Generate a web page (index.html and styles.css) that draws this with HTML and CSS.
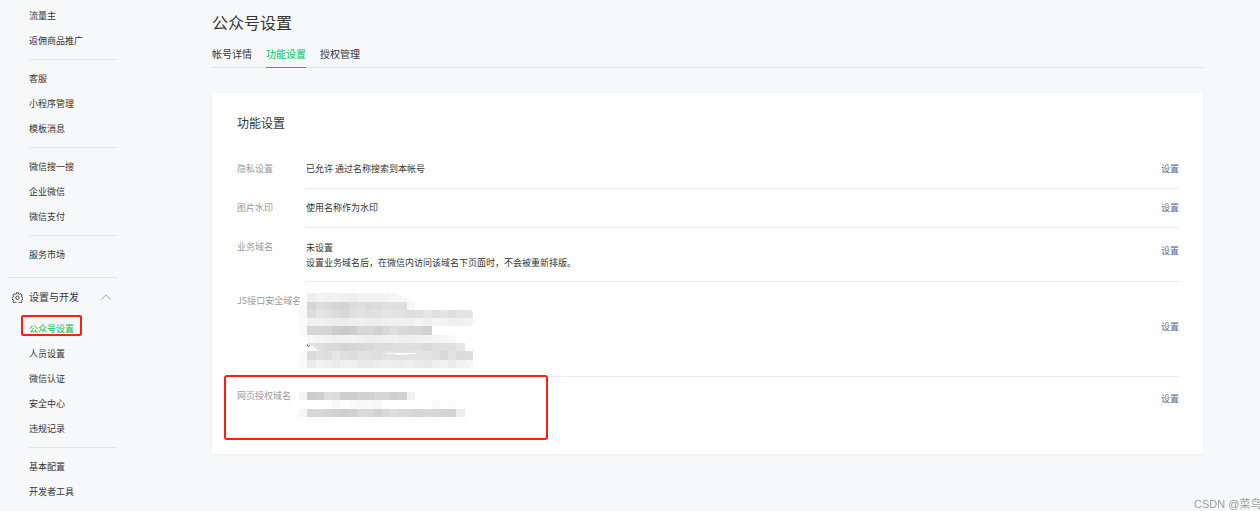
FILE: index.html
```html
<!DOCTYPE html>
<html lang="zh-CN">
<head>
<meta charset="utf-8">
<title>公众号设置</title>
<link rel="stylesheet" href="styles.css">
</head>
<body>
<div class="layout">
  <nav class="sidebar">
    <ul class="menu">
      <li><a href="#">流量主</a></li>
      <li><a href="#">返佣商品推广</a></li>
    </ul>
    <ul class="menu">
      <li><a href="#">客服</a></li>
      <li><a href="#">小程序管理</a></li>
      <li><a href="#">模板消息</a></li>
    </ul>
    <ul class="menu">
      <li><a href="#">微信搜一搜</a></li>
      <li><a href="#">企业微信</a></li>
      <li><a href="#">微信支付</a></li>
    </ul>
    <ul class="menu">
      <li><a href="#">服务市场</a></li>
    </ul>
    <button class="section" type="button" aria-expanded="true">
      <svg class="gear" viewBox="0 0 24 24" aria-hidden="true">
        <path d="M10 1.500h4l.7 3 2 .9 2.700-1.700 2.800 2.800-1.700 2.700.9 2 2.600.8v4l-2.600.7-.9 2 1.700 2.700-2.800 2.800-2.700-1.700-2 .9-.7 3h-4l-.7-3-2-.9-2.700 1.700-2.800-2.800 1.700-2.700-.9-2-2.600-.7v-4l2.600-.8.9-2-1.700-2.700 2.800-2.800 2.700 1.700 2-.9z"/>
        <circle cx="12" cy="12.500" r="3.800"/>
      </svg>
      <span>设置与开发</span>
      <svg class="chevron" viewBox="0 0 10 6" aria-hidden="true"><path d="M.5 5.500 5 .8l4.500 4.700"/></svg>
    </button>
    <ul class="menu">
      <li><a class="active" href="#" aria-current="page">公众号设置</a></li>
      <li><a href="#">人员设置</a></li>
      <li><a href="#">微信认证</a></li>
      <li><a href="#">安全中心</a></li>
      <li><a href="#">违规记录</a></li>
    </ul>
    <ul class="menu">
      <li><a href="#">基本配置</a></li>
      <li><a href="#">开发者工具</a></li>
    </ul>
  </nav>

  <main class="main">
    <h1>公众号设置</h1>
    <div class="tabs">
      <a href="#">帐号详情</a>
      <a class="selected" href="#">功能设置</a>
      <a href="#">授权管理</a>
    </div>
    <section class="card">
      <h2>功能设置</h2>
      <div class="row">
        <div class="label">隐私设置</div>
        <div class="body"><div class="value">已允许 通过名称搜索到本帐号</div><a class="action" href="#">设置</a></div>
      </div>
      <div class="row">
        <div class="label">图片水印</div>
        <div class="body"><div class="value">使用名称作为水印</div><a class="action" href="#">设置</a></div>
      </div>
      <div class="row note">
        <div class="label">业务域名</div>
        <div class="body"><div class="value"><p>未设置</p><p>设置业务域名后，在微信内访问该域名下页面时，不会被重新排版。</p></div><a class="action" href="#">设置</a></div>
      </div>
      <div class="row domains">
        <div class="label">JS接口安全域名</div>
        <div class="body">
          <div class="value redacted"><svg class="mosaic" data-grid="long" width="174" height="75" viewBox="-1 0 21 9" aria-hidden="true"></svg></div>
          <a class="action" href="#">设置</a>
        </div>
      </div>
      <div class="row marked">
        <div class="label">网页授权域名</div>
        <div class="body">
          <div class="value redacted short"><svg class="mosaic" data-grid="short" width="174" height="25" viewBox="-1 0 21 3" aria-hidden="true"></svg></div>
          <a class="action" href="#">设置</a>
        </div>
      </div>
    </section>
  </main>
</div>
<div class="watermark">CSDN @菜鸟</div>
<script src="mosaic.js"></script>
</body>
</html>
```
FILE: styles.css
```css
*, *::after { box-sizing: border-box; }
body {
  margin: 0;
  min-height: 100vh;
  background: #f7f8fa;
  color: #353535;
  font: 9px/14px "Noto Sans CJK SC", sans-serif;
}
a { color: inherit; text-decoration: none; }
h1, h2, p, ul { margin: 0; padding: 0; font-weight: 400; }
.layout { display: flex; }
.sidebar { flex: none; width: 124px; padding: 3px 7px 0; }
.menu { list-style: none; margin-left: 22px; }
.menu a { display: block; position: relative; line-height: 25px; white-space: nowrap; }
.menu + .menu { margin-top: 6px; padding-top: 6px; border-top: 1px solid #e4e6e9; }
.menu .active { color: #07c160; }
.menu .active::after {
  content: "";
  position: absolute;
  left: -8px;
  top: -1px;
  width: 61px;
  height: 21px;
  border: 2px solid #fa1e14;
  border-radius: 2px;
}
.section {
  display: flex;
  align-items: center;
  width: 100%;
  height: 39px;
  margin-top: 10px;
  padding: 0 6px 0 5px;
  border: 0;
  border-top: 1px solid #e4e6e9;
  background: none;
  color: inherit;
  font: inherit;
  font-size: 10px;
}
.gear { width: 11px; height: 11px; margin-right: 6px; fill: none; stroke: #353535; stroke-width: 2; }
.chevron { width: 10px; height: 6px; margin-left: auto; fill: none; stroke: #a8aaad; stroke-width: 1; }

.main { flex: 1; min-width: 0; padding: 10px 57px 0 88px; }
h1 { font-size: 16px; line-height: 24px; }
.tabs { display: flex; gap: 14px; height: 28px; margin-top: 6px; border-bottom: 1px solid #e0e2e5; }
.tabs a { height: 28px; font-size: 10px; line-height: 28px; }
.tabs .selected { color: #07c160; border-bottom: 1px solid #07c160; }
.card { margin-top: 25px; padding: 20px 24px 31px 25px; background: #fff; box-shadow: 0 1px 2px #eceef0; }
h2 { margin-bottom: 17px; font-size: 12px; line-height: 20px; }
.row { display: flex; position: relative; }
.label { flex: none; width: 69px; padding-top: 12px; color: #9a9a9a; white-space: nowrap; }
.body { flex: 1; display: flex; align-items: center; justify-content: space-between; padding: 12px 0; border-bottom: 1px solid #e9ecf0; }
.row:last-child .body { border-bottom: 0; }
.action { flex: none; color: #576b95; }
.note .body { padding-bottom: 11px; }
.note p { line-height: 15px; }
.note .action { align-self: flex-start; padding-top: 4px; }
.domains .body { padding: 11px 0 16px; }
.redacted { height: 67px; }
.marked .body { padding: 15px 0 9px; }
.redacted.short { height: 22px; }
.marked .action { align-self: flex-start; }
.mosaic { display: block; margin-left: -7px; shape-rendering: crispEdges; }
.marked::after {
  content: "";
  position: absolute;
  left: -13px;
  top: -2px;
  width: 324px;
  height: 65px;
  border: 2px solid #fa1e14;
  border-radius: 3px;
}
.watermark {
  position: fixed;
  right: 0;
  bottom: 0;
  width: 66px;
  height: 14px;
  overflow: hidden;
  white-space: nowrap;
  color: #999b9e;
  font: 11px/14px "Liberation Sans", "Noto Sans CJK SC", sans-serif;
}
```
FILE: mosaic.js
```js
// Each line is a row of cells, two hex digits of grey per cell; ".." is empty.
const grids = {
  long: [
    "..eff3f1f2f0eff3f3f3f4f7f8",
    "f9d6dedbd5d4dcdfdadce0dfe0f6",
    "f8dce4e1dcd7dfe2e0e1e4e3e2dedfe6dfe4dfe3e4",
    "fcf1f1eeececefefeeeef0f0f1f0f5f0f4f3f1eff3",
    "f9d6d6d5cdc9cdd7d8d1d8dfd9d6d7d0",
    "..f8f5f3f1f2f3efeeeff1f1eeeff0f2f4f6f8",
    "..e2dfdadad5d7d8dadddcdedfdfdfdadfdfdfe7",
    "f9dae0dee6dfdce1e0dfe3e2e1e3e3e3e0d9e3dbdc",
    "faebf2efeaf0efe9eaedeeededefebe8eef1ebf1f6"
  ],
  short: [
    "f4cccfdddbcecdd1d2d6d6d0d1f3",
    "........f9..fbf9f9f7............fa..fb",
    "f6d6d8d5d0cdd0d8d9d1d8dedad7d5d8d7d5d3ee"
  ]
};
const ns = "http://www.w3.org/2000/svg";
document.querySelectorAll(".mosaic").forEach(svg => {
  grids[svg.dataset.grid].forEach((line, y) => {
    line.match(/../g).forEach((grey, x) => {
      if (grey === "..") return;
      const cell = document.createElementNS(ns, "rect");
      cell.setAttribute("x", x - 1);
      cell.setAttribute("y", y);
      cell.setAttribute("width", 1);
      cell.setAttribute("height", 1);
      cell.setAttribute("fill", "#" + grey.repeat(3));
      svg.append(cell);
    });
  });
  if (svg.dataset.grid === "long") {
    // Brush edges: a lighter sweep and a leftover glyph corner.
    svg.insertAdjacentHTML("beforeend",
      '<path d="M9.400 7.250Q11.500 7.600 13.400 7.250Q11.500 7.300 9.400 7.250" fill="#fafafa"/>' +
      '<path d="M0 6L1.500 7H0z" fill="#fff"/>' +
      '<path d="M0 6.100L.15 6.500L.3 6.200" fill="none" stroke="#8b7a58" stroke-width=".12"/>' +
      '<path d="M11 0H12.200V.95Q12 .4 11 .35zM20 2V2.500Q20 2 19.500 2zM20 4V3.500Q20 4 19.500 4zM20 9V8.500Q20 9 19.300 9z" fill="#fff"/>');
  }
});
```
